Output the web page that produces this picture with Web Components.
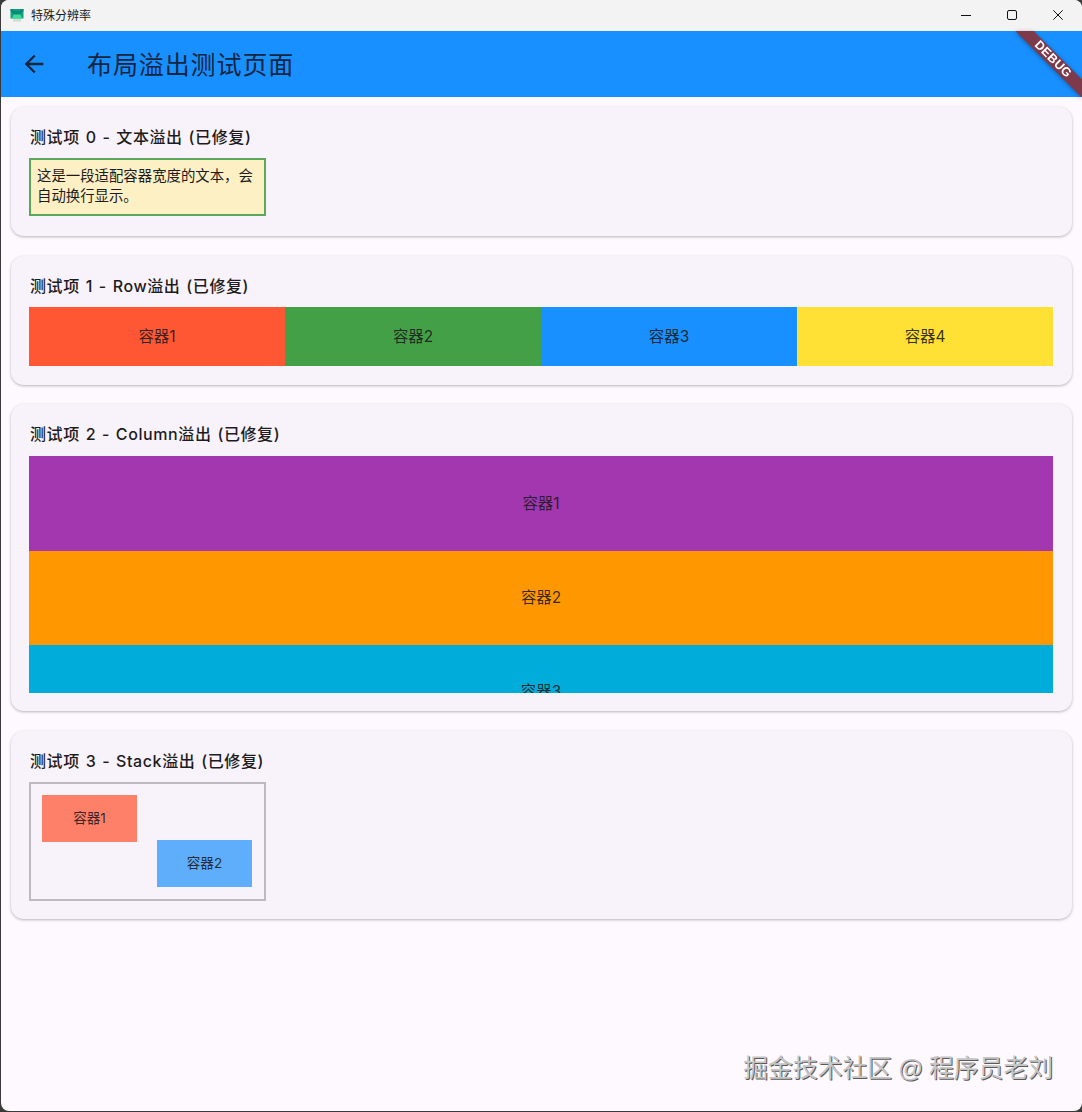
<!DOCTYPE html>
<html>
<head>
<meta charset="utf-8">
<style>
  html, body { margin: 0; height: 100%; background: #3a3a3a; overflow: hidden; }
  body { font-family: Inter, "Noto Sans CJK SC", sans-serif; color: #1d1b20; }
</style>
</head>
<body>
<app-window>
  <title-bar slot="top" label="特殊分辨率"></title-bar>
  <app-bar slot="top" label="布局溢出测试页面"></app-bar>

  <test-card label="测试项 0 - 文本溢出 (已修复)" style="height:129.5px">
    <note-box>这是一段适配容器宽度的文本，会自动换行显示。</note-box>
  </test-card>

  <test-card label="测试项 1 - Row溢出 (已修复)" style="height:129px">
    <color-row>
      <color-box color="#ff5733">容器1</color-box>
      <color-box color="#43a047">容器2</color-box>
      <color-box color="#1890ff">容器3</color-box>
      <color-box color="#ffe135">容器4</color-box>
    </color-row>
  </test-card>

  <test-card label="测试项 2 - Column溢出 (已修复)" style="height:307px">
    <color-column>
      <color-box color="#a237b0" height="95">容器1</color-box>
      <color-box color="#ff9800" height="94">容器2</color-box>
      <color-box color="#00acd9" height="94">容器3</color-box>
    </color-column>
  </test-card>

  <test-card label="测试项 3 - Stack溢出 (已修复)" style="height:188px">
    <stack-box></stack-box>
  </test-card>

  <debug-banner></debug-banner>
  <water-mark>掘金技术社区 @ 程序员老刘</water-mark>
</app-window>

<script>
class AppWindow extends HTMLElement {
  constructor() {
    super();
    this.attachShadow({ mode: 'open' });
    this.shadowRoot.innerHTML = `
      <style>
        :host {
          display: flex;
          flex-direction: column;
          position: relative;
          box-sizing: border-box;
          height: 1111px;
          margin-left: 1px;
          background: #fef8ff;
          border-radius: 8px;
          overflow: hidden;
        }
        .content {
          display: flex;
          flex-direction: column;
          gap: 19.6px;
          padding: 9.5px 10px 0 10px;
        }
      </style>
      <slot name="top"></slot>
      <div class="content"><slot></slot></div>
    `;
  }
}
customElements.define('app-window', AppWindow);

class TitleBar extends HTMLElement {
  constructor() {
    super();
    this.attachShadow({ mode: 'open' });
    this.shadowRoot.innerHTML = `
      <style>
        :host {
          display: flex;
          align-items: center;
          height: 31px;
          padding-right: 1px;
          box-sizing: border-box;
          background: #f3f3f3;
          font-size: 12px;
          color: #1a1a1a;
        }
        .logo { margin-left: 9px; width: 14px; height: 14px; flex: none; }
        .label { margin-left: 7px; flex: 1; padding-bottom: 3px; }
        .btn { width: 46px; display: flex; justify-content: center; flex: none; padding-bottom: 2px; }
        svg { display: block; }
      </style>
      <svg class="logo" viewBox="0 0 14 14">
        <rect x=".5" y="0" width="13" height="9.5" fill="#10a080"/>
        <path d="M.5 0H3L4.5 2H9.5L11 0H13.5V2L11 4.5V7H3V4.5L.5 2Z" fill="#0d8a74"/>
        <path d="M2 9.5L3.5 5.5H10.5L12 9.5Z" fill="#3ddc97"/>
        <rect x="3" y="10" width="8" height="2.6" fill="#d3dbd6"/>
      </svg>
      <span class="label"></span>
      <span class="btn"><svg width="10" height="10" viewBox="0 0 10 10"><path d="M0 5.5H10" stroke="#111" stroke-width="1" fill="none"/></svg></span>
      <span class="btn"><svg width="10" height="10" viewBox="0 0 10 10"><rect x=".5" y=".5" width="9" height="9" rx="1.5" stroke="#111" stroke-width="1" fill="none"/></svg></span>
      <span class="btn"><svg width="10" height="10" viewBox="0 0 10 10"><path d="M.3 .3L9.7 9.7M9.7 .3L.3 9.7" stroke="#111" stroke-width="1" fill="none"/></svg></span>
    `;
    this.shadowRoot.querySelector('.label').textContent = this.getAttribute('label');
  }
}
customElements.define('title-bar', TitleBar);

class AppBar extends HTMLElement {
  constructor() {
    super();
    this.attachShadow({ mode: 'open' });
    this.shadowRoot.innerHTML = `
      <style>
        :host {
          display: flex;
          align-items: center;
          height: 66px;
          background: #1890ff;
          color: #14253f;
          font-size: 25px;
          letter-spacing: .9px;
        }
        svg { margin-left: 19px; width: 28px; height: 28px; flex: none; }
        .label { margin-left: 39px; padding-bottom: 3px; }
      </style>
      <svg viewBox="0 0 24 24"><path fill="#14253f" d="M20 11H7.83l5.59-5.59L12 4l-8 8 8 8 1.41-1.41L7.83 13H20z"/></svg>
      <span class="label"></span>
    `;
    this.shadowRoot.querySelector('.label').textContent = this.getAttribute('label');
  }
}
customElements.define('app-bar', AppBar);

class TestCard extends HTMLElement {
  constructor() {
    super();
    this.attachShadow({ mode: 'open' });
    this.shadowRoot.innerHTML = `
      <style>
        :host {
          display: block;
          box-sizing: border-box;
          padding: 19px 19px 19px 18px;
          background: #f8f3fb;
          border-radius: 13px;
          box-shadow: 0 1px 3px rgba(0, 0, 0, .28);
        }
        h4 {
          margin: 0 0 11.5px 1px;
          height: 21px;
          line-height: 23px;
          font-size: 16px;
          font-weight: 500;
          letter-spacing: .6px;
          word-spacing: 1px;
          color: #1d1b20;
          white-space: nowrap;
        }
      </style>
      <h4></h4>
      <slot></slot>
    `;
    this.shadowRoot.querySelector('h4').textContent = this.getAttribute('label');
  }
}
customElements.define('test-card', TestCard);

class NoteBox extends HTMLElement {
  constructor() {
    super();
    this.attachShadow({ mode: 'open' });
    this.shadowRoot.innerHTML = `
      <style>
        :host {
          display: block;
          box-sizing: border-box;
          width: 237px;
          height: 58px;
          margin-top: .5px;
          padding: 6px 6px;
          background: #fdf0c4;
          border: 2px solid #5aa85c;
          font-size: 14.4px;
          line-height: 20px;
          color: #1d1b20;
        }
      </style>
      <slot></slot>
    `;
  }
}
customElements.define('note-box', NoteBox);

class ColorBox extends HTMLElement {
  constructor() {
    super();
    this.attachShadow({ mode: 'open' });
    this.shadowRoot.innerHTML = `
      <style>
        :host {
          display: flex;
          flex: 1;
          box-sizing: border-box;
          align-items: center;
          justify-content: center;
          padding-bottom: 2.5px;
          font-size: 15.4px;
          color: rgba(29, 27, 32, .9);
        }
      </style>
      <slot></slot>
    `;
    this.style.background = this.getAttribute('color');
    if (this.hasAttribute('height')) {
      this.style.flex = 'none';
      this.style.height = this.getAttribute('height') + 'px';
    }
  }
}
customElements.define('color-box', ColorBox);

class ColorRow extends HTMLElement {
  constructor() {
    super();
    this.attachShadow({ mode: 'open' });
    this.shadowRoot.innerHTML = `
      <style>
        :host { display: flex; height: 59px; }
      </style>
      <slot></slot>
    `;
  }
}
customElements.define('color-row', ColorRow);

class ColorColumn extends HTMLElement {
  constructor() {
    super();
    this.attachShadow({ mode: 'open' });
    this.shadowRoot.innerHTML = `
      <style>
        :host { display: flex; flex-direction: column; height: 237px; overflow: hidden; }
      </style>
      <slot></slot>
    `;
  }
}
customElements.define('color-column', ColorColumn);

class StackBox extends HTMLElement {
  constructor() {
    super();
    this.attachShadow({ mode: 'open' });
    this.shadowRoot.innerHTML = `
      <style>
        :host {
          display: block;
          position: relative;
          box-sizing: border-box;
          width: 237px;
          height: 119px;
          border: 2px solid #bcb9c1;
        }
        .item {
          position: absolute;
          display: flex;
          box-sizing: border-box;
          align-items: center;
          justify-content: center;
          width: 95px;
          height: 47px;
          padding-bottom: 3px;
          font-size: 13.6px;
          color: rgba(29, 27, 32, .9);
        }
        .a { left: 11px; top: 11px; background: #ff8069; }
        .b { right: 12px; bottom: 12px; background: #5eaefc; }
      </style>
      <div class="item a">容器1</div>
      <div class="item b">容器2</div>
    `;
  }
}
customElements.define('stack-box', StackBox);

class DebugBanner extends HTMLElement {
  constructor() {
    super();
    this.attachShadow({ mode: 'open' });
    this.shadowRoot.innerHTML = `
      <style>
        :host {
          position: absolute;
          top: 31px;
          right: 0;
          width: 66px;
          height: 66px;
          overflow: hidden;
          filter: drop-shadow(0 1px 2px rgba(0, 0, 0, .35));
        }
        .band {
          position: absolute;
          left: -11px;
          top: 21.5px;
          width: 96px;
          height: 12.5px;
          background: #7c3a4a;
          color: #fff;
          text-align: center;
          font: bold 12.4px/12.5px "Liberation Sans", sans-serif;
          letter-spacing: .3px;
          transform: rotate(45deg);
        }
      </style>
      <div class="band">DEBUG</div>
    `;
  }
}
customElements.define('debug-banner', DebugBanner);

class WaterMark extends HTMLElement {
  constructor() {
    super();
    this.attachShadow({ mode: 'open' });
    this.shadowRoot.innerHTML = `
      <style>
        :host {
          position: absolute;
          right: 29px;
          bottom: 27px;
          font-family: "Liberation Sans", "Noto Sans CJK SC", sans-serif;
          font-size: 24.8px;
          line-height: 30px;
          word-spacing: -1px;
          color: #c6c6c6;
          text-shadow: 1px 1px 0 #5a5a5a;
          white-space: nowrap;
        }
      </style>
      <slot></slot>
    `;
  }
}
customElements.define('water-mark', WaterMark);
</script>
</body>
</html>
